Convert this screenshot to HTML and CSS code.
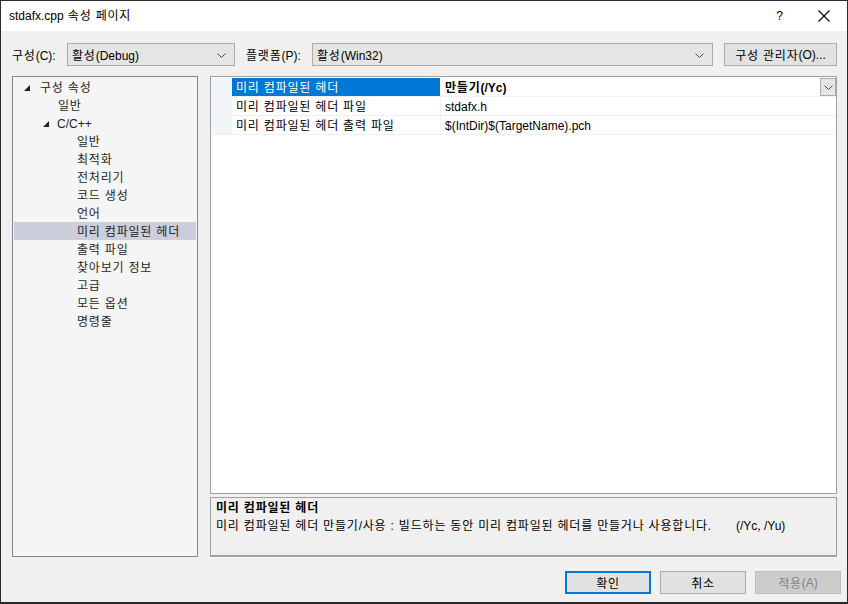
FILE: index.html
```html
<!DOCTYPE html>
<html lang="ko">
<head>
<meta charset="utf-8">
<title>stdafx.cpp 속성 페이지</title>
<link rel="stylesheet" href="styles.css">
</head>
<body>
<div class="window">
  <div class="titlebar">
    <div class="title"><span class="lat">stdafx.cpp</span> 속성 페이지</div>
    <div class="tbtn help">?</div>
    <div class="tbtn close">
      <svg width="12" height="12" viewBox="0 0 12 12"><path d="M0.5 0.5 L11.5 11.5 M11.5 0.5 L0.5 11.5" stroke="#000" stroke-width="1.1" fill="none"/></svg>
    </div>
  </div>
  <div class="body">
    <div class="toolbar">
      <span class="lbl lbl1">구성<span class="lat">(C):</span></span>
      <div class="combo combo1"><span>활성<span class="lat">(Debug)</span></span><svg class="chev" width="9" height="5" viewBox="0 0 9 5"><path d="M0.5 0.5 L4.5 4.5 L8.5 0.5" stroke="#444" fill="none"/></svg></div>
      <span class="lbl lbl2">플랫폼<span class="lat">(P):</span></span>
      <div class="combo combo2"><span>활성<span class="lat">(Win32)</span></span><svg class="chev" width="9" height="5" viewBox="0 0 9 5"><path d="M0.5 0.5 L4.5 4.5 L8.5 0.5" stroke="#444" fill="none"/></svg></div>
      <div class="btn cfgmgr">구성 관리자<span class="lat">(O)...</span></div>
    </div>
    <div class="main">
      <div class="tree">
        <div class="node l0"><svg class="tri" width="6" height="6" viewBox="0 0 6 6"><polygon points="6,0 6,6 0,6" fill="#1e1e1e"/></svg>구성 속성</div>
        <div class="node l1">일반</div>
        <div class="node l1x"><svg class="tri" width="6" height="6" viewBox="0 0 6 6"><polygon points="6,0 6,6 0,6" fill="#1e1e1e"/></svg><span class="lat">C/C++</span></div>
        <div class="node l2">일반</div>
        <div class="node l2">최적화</div>
        <div class="node l2">전처리기</div>
        <div class="node l2">코드 생성</div>
        <div class="node l2">언어</div>
        <div class="node l2 sel">미리 컴파일된 헤더</div>
        <div class="node l2">출력 파일</div>
        <div class="node l2">찾아보기 정보</div>
        <div class="node l2">고급</div>
        <div class="node l2">모든 옵션</div>
        <div class="node l2">명령줄</div>
      </div>
      <div class="right">
        <div class="grid">
          <div class="row selrow">
            <div class="margin"></div>
            <div class="name">미리 컴파일된 헤더</div>
            <div class="value bold"><span class="vt">만들기<span class="lat">(/Yc)</span></span><div class="ddbtn"><svg width="9" height="5" viewBox="0 0 9 5"><path d="M0.5 0.5 L4.5 4.5 L8.5 0.5" stroke="#444" fill="none"/></svg></div></div>
          </div>
          <div class="row">
            <div class="margin"></div>
            <div class="name">미리 컴파일된 헤더 파일</div>
            <div class="value lat"><span class="vt">stdafx.h</span></div>
          </div>
          <div class="row">
            <div class="margin"></div>
            <div class="name">미리 컴파일된 헤더 출력 파일</div>
            <div class="value lat"><span class="vt">$(IntDir)$(TargetName).pch</span></div>
          </div>
        </div>
        <div class="desc">
          <div class="dtitle">미리 컴파일된 헤더</div>
          <div class="dtext"><span>미리 컴파일된 헤더 만들기/사용 : 빌드하는 동안 미리 컴파일된 헤더를 만들거나 사용합니다.</span><span class="sw lat">(/Yc, /Yu)</span></div>
        </div>
      </div>
    </div>
    <div class="buttons">
      <div class="btn dbtn default">확인</div>
      <div class="btn dbtn">취소</div>
      <div class="btn dbtn disabled">적용<span class="lat">(A)</span></div>
    </div>
  </div>
</div>
</body>
</html>
```

FILE: styles.css
```css
* { box-sizing: border-box; }
html, body { margin: 0; padding: 0; }
body {
  width: 848px;
  height: 604px;
  overflow: hidden;
  font-family: "Liberation Sans", "Noto Sans CJK KR", sans-serif;
  font-size: 12px;
  letter-spacing: 0.8px;
  color: #000;
  background: #f0f0f0;
}
.lat { letter-spacing: 0; }
.window {
  width: 848px;
  height: 604px;
  border: 1px solid #2b2b2b;
  border-bottom-width: 2px;
  display: flex;
  flex-direction: column;
  background: #f0f0f0;
}
.titlebar {
  height: 30px;
  background: #fff;
  display: flex;
  align-items: center;
  flex-shrink: 0;
}
.title {
  padding-left: 8px;
  flex: 1;
  font-size: 12px;
  line-height: 16px;
}
.tbtn {
  width: 44px;
  height: 30px;
  display: flex;
  align-items: center;
  justify-content: center;
}
.help { font-size: 12px; }
.close { margin-right: 1px; }
.body {
  flex: 1;
  display: flex;
  flex-direction: column;
  padding: 12px 10px 0 11px;
}
.toolbar {
  height: 23px;
  display: flex;
  align-items: center;
  margin-bottom: 10px;
}
.lbl { white-space: nowrap; }
.lbl1 { width: 55px; }
.lbl2 { width: 66px; margin-left: 11px; }
.combo {
  height: 23px;
  background: #e5e5e5;
  border: 1px solid #acacac;
  display: flex;
  align-items: center;
  padding: 0 8px 0 4px;
  justify-content: space-between;
}
.combo1 { width: 168px; }
.combo2 { width: 401px; }
.chev { margin-top: 1px; }
.btn {
  height: 23px;
  background: #e1e1e1;
  border: 1px solid #adadad;
  display: flex;
  align-items: center;
  justify-content: center;
}
.cfgmgr { width: 113px; margin-left: 11px; }
.main {
  height: 481px;
  display: flex;
}
.tree {
  width: 186px;
  background: #f5f5f5;
  border: 1px solid #828790;
  padding-top: 1px;
  padding-left: 1px;
  padding-right: 1px;
}
.node {
  height: 18px;
  line-height: 16px;
  padding-top: 2px;
  display: flex;
  align-items: center;
  white-space: nowrap;
  color: #1e1e1e;
}
.tri { margin-right: 10px; margin-top: 0; flex-shrink: 0; }
.l0 { padding-left: 10px; }
.l1 { padding-left: 44px; }
.l1x { padding-left: 29px; }
.l1x .tri { margin-right: 8px; }
.l2 { padding-left: 63px; }
.sel { background: #cccedb; }
.right {
  margin-left: 12px;
  width: 627px;
  display: flex;
  flex-direction: column;
}
.grid {
  height: 418px;
  background: #fff;
  border: 1px solid #a0a0a0;
  padding-top: 1px;
}
.row {
  height: 19px;
  display: flex;
  border-bottom: 1px solid #f0f0f0;
}
.margin {
  width: 21px;
  background: #f2f5fa;
}
.name {
  width: 209px;
  padding-left: 4px;
  padding-top: 2px;
  line-height: 16px;
  white-space: nowrap;
  border-right: 1px solid #f0f0f0;
}
.selrow .name { background: #0078d7; color: #fff; border-right-color: #fff; }
.value {
  flex: 1;
  padding-left: 4px;
  line-height: 16px;
  white-space: nowrap;
  display: flex;
  justify-content: space-between;
}
.vt { padding-top: 2px; }
.bold { font-weight: bold; }
.ddbtn {
  width: 16px;
  height: 18px;
  background: #e5e5e5;
  border: 1px solid #acacac;
  display: flex;
  align-items: center;
  justify-content: center;
}
.desc {
  margin-top: 3px;
  height: 60px;
  border: 1px solid #a0a0a0;
  border-bottom: 2px solid #a0a0a0;
  box-shadow: 0 1px 0 #fff;
  padding: 0 5px;
  background: #f0f0f0;
}
.dtitle { font-weight: bold; line-height: 17px; margin-top: 2px; }
.dtext { line-height: 19px; white-space: nowrap; }
.sw { margin-left: 24px; }
.buttons {
  display: flex;
  justify-content: flex-end;
  gap: 9px;
  margin-top: 14px;
  margin-right: -4px;
}
.dbtn { width: 86px; }
.default { border: 2px solid #0078d7; }
.disabled { background: #cccccc; border-color: #bfbfbf; color: #838383; }
```
